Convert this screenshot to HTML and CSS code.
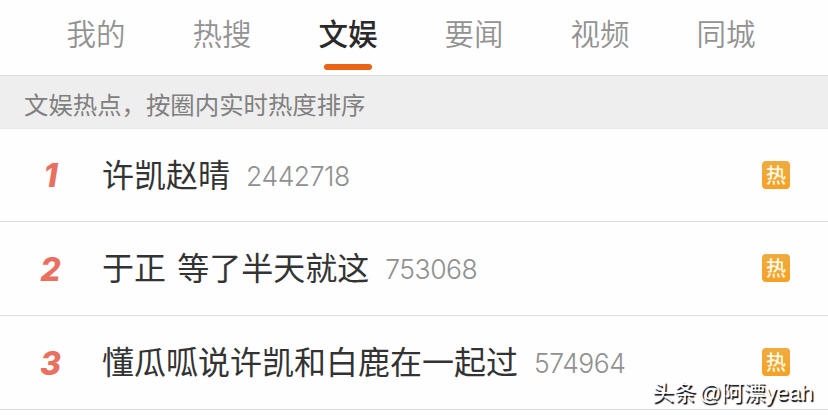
FILE: index.html
```html
<!DOCTYPE html>
<html lang="zh-CN">
<head>
<meta charset="utf-8">
<title>文娱热点</title>
<link rel="stylesheet" href="styles.css">
</head>
<body>
<nav class="tabs">
  <a class="tab">我的</a>
  <a class="tab">热搜</a>
  <a class="tab active">文娱</a>
  <a class="tab">要闻</a>
  <a class="tab">视频</a>
  <a class="tab">同城</a>
</nav>
<div class="notice">文娱热点，按圈内实时热度排序</div>
<main class="list">
  <div class="row"><span class="rank">1</span><span class="title">许凯赵晴</span><span class="count">2442718</span><span class="hot">热</span></div>
  <div class="row"><span class="rank">2</span><span class="title">于正 等了半天就这</span><span class="count">753068</span><span class="hot">热</span></div>
  <div class="row"><span class="rank">3</span><span class="title">懂瓜呱说许凯和白鹿在一起过</span><span class="count">574964</span><span class="hot">热</span></div>
</main>
<div class="watermark">头条 @阿漂yeah</div>
</body>
</html>
```

FILE: styles.css
```css
* { box-sizing: border-box; }
body {
  margin: 0;
  height: 415px;
  overflow: hidden;
  position: relative;
  background: #fefefe;
  color: #333;
  font-family: "Noto Sans CJK SC", sans-serif;
}
.tabs {
  display: flex;
  height: 76px;
  padding: 0 39px 0 33px;
  border-bottom: 1px solid #dedede;
}
.tab {
  flex: 1;
  display: flex;
  flex-direction: column;
  align-items: center;
  padding-top: 10px;
  font-size: 29.5px;
  line-height: 44px;
  font-weight: 350;
  color: #929292;
}
.active { color: #2a2a2a; font-weight: 500; }
.active::after {
  content: "";
  width: 48px;
  height: 6px;
  margin-top: 10px;
  border-radius: 3px;
  background: #e96414;
}
.notice {
  height: 53px;
  padding-left: 24px;
  background: #eee;
  border-bottom: 1px solid #e9e9e9;
  font-size: 24.4px;
  line-height: 56px;
  color: #808080;
  white-space: nowrap;
}
.row {
  display: flex;
  align-items: center;
  height: 94px;
  padding-right: 38px;
  border-bottom: 1px solid #dcdcdc;
  white-space: nowrap;
}
.row:first-child { height: 93px; }
.rank {
  width: 101px;
  margin-right: 1px;
  padding-top: 2px;
  text-align: center;
  font: italic 800 32px/40px Inter, sans-serif;
  color: #e9705f;
}
.title { padding-bottom: 5px; font-size: 32px; line-height: 48px; font-weight: 400; word-spacing: 4px; }
.count {
  margin-left: 16px;
  padding-top: 1px;
  font: 300 26.5px/40px Inter, sans-serif;
  letter-spacing: -0.45px;
  color: #909090;
}
.hot {
  width: 28px;
  height: 28px;
  margin-left: auto;
  margin-bottom: 1px;
  border-radius: 4px;
  background: linear-gradient(#efac40, #f5a126);
  color: #fffbe9;
  font-size: 20px;
  font-weight: 500;
  line-height: 27px;
  text-align: center;
}
.watermark {
  position: absolute;
  left: 652px;
  top: 376px;
  font: 22px/34px "Liberation Sans", "Noto Sans CJK SC", sans-serif;
  word-spacing: -3px;
  color: #fff;
  text-shadow: 1.5px 1.5px 1px #000;
  white-space: nowrap;
}
```
